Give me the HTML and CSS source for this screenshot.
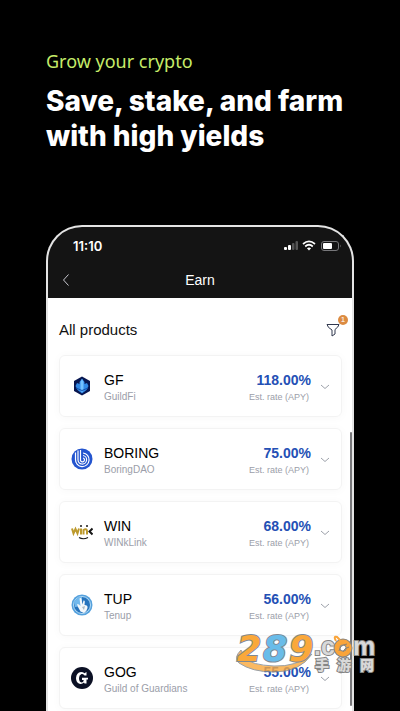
FILE: index.html
```html
<!DOCTYPE html>
<html lang="en">
<head>
<meta charset="utf-8">
<meta name="viewport" content="width=device-width, initial-scale=1">
<title>Earn</title>
<link rel="stylesheet" href="styles.css">
</head>
<body>
<header class="hero">
  <p class="eyebrow">Grow your crypto</p>
  <h1 class="headline">Save, stake, and farm<br>with high yields</h1>
</header>
<main class="phone">
  <div class="topbar">
    <div class="status">
      <span class="time">11:10</span>
      <svg class="signals" width="58" height="12" viewBox="0 0 58 12" aria-hidden="true">
        <g fill="#fff"><rect x="0" y="7" width="3" height="3" rx="1"/><rect x="4" y="5" width="3" height="5" rx="1"/></g>
        <g fill="#555"><rect x="8" y="3" width="2.500" height="7" rx="1"/><rect x="11.500" y="1" width="2.500" height="9" rx="1"/></g>
        <g fill="none" stroke="#fff" stroke-width="1.700"><path d="M19 4Q25 -1.200 31 4"/><path d="M21.200 6.500Q25 3 28.800 6.500"/></g>
        <path d="M25 10.500L22.900 8.300Q25 6.600 27.100 8.300Z" fill="#fff"/>
        <rect x="37.500" y="1.500" width="17" height="9" rx="2.500" fill="none" stroke="#77777a"/>
        <rect x="39" y="3" width="9" height="6" rx="1" fill="#fff"/>
        <path d="M56 4.500Q57.500 6 56 7.500Z" fill="#777"/>
      </svg>
    </div>
    <nav class="nav">
      <button class="back" type="button" aria-label="Back"><svg width="8" height="14" viewBox="0 0 8 14"><path d="M6.500 1.500L1.500 7l5 5.500"/></svg></button>
      <span class="nav-title">Earn</span>
    </nav>
  </div>
  <section class="products">
    <div class="list-head">
      <h2>All products</h2>
      <button class="filter" type="button" aria-label="Filter">
        <svg width="14" height="14" viewBox="0 0 14 14"><path d="M1 1.500H13Q12.500 4 9 6.500V11L6 13V7Q1.500 4.500 1 1.500Z"/></svg>
        <span class="badge">1</span>
      </button>
    </div>
    <ul class="cards">
      <li class="card">
        <svg class="coin" viewBox="0 0 22 22" aria-hidden="true">
          <path d="M11 1.500L19 6V16L11 20.500L3 16V6Z" fill="#071650"/>
          <path d="M11 3.500L13.500 7V9L16 8L17.500 11L15.500 15L11 18.500L6.500 15L4.500 11L6 8L8.500 9V7Z" fill="#3289e6"/>
          <path d="M11 4L12.500 7V15L11 17.500L9.500 15V7Z" fill="#73c1ff"/><path d="M5 13L11 15.500L17 13" fill="none" stroke="#1251ae"/>
        </svg>
        <div class="name"><strong>GF</strong><span>GuildFi</span></div>
        <div class="rate"><strong>118.00%</strong><span>Est. rate (APY)</span></div>
        <button class="expand" type="button" aria-label="Show GF"><svg width="10" height="6" viewBox="0 0 10 6"><path d="M1 1l4 3.500L9 1"/></svg></button>
      </li>
      <li class="card">
        <svg class="coin" viewBox="0 0 22 22" aria-hidden="true">
          <circle cx="11" cy="11" r="10.500" fill="#2455cf"/>
          <g fill="none" stroke="#fff" stroke-width="1.200"><path d="M4.500 4.500V11.500A6.800 6.800 0 1 0 12 5"/><path d="M7 2.500V11.500A4.300 4.300 0 1 0 12 7.500"/><path d="M9.500 2V11.500A2 2 0 1 0 12 10"/></g>
        </svg>
        <div class="name"><strong>BORING</strong><span>BoringDAO</span></div>
        <div class="rate"><strong>75.00%</strong><span>Est. rate (APY)</span></div>
        <button class="expand" type="button" aria-label="Show BORING"><svg width="10" height="6" viewBox="0 0 10 6"><path d="M1 1l4 3.500L9 1"/></svg></button>
      </li>
      <li class="card">
        <svg class="coin" viewBox="0 0 22 22" aria-hidden="true">
          <g fill="none" stroke="#bd9a2d" stroke-width="2"><path d="M1 7.500L2.500 12.500L4.500 8L6.500 12.500L8 7.500"/><path d="M10 7.500V13.500"/><path d="M12.500 13.500V9Q15.500 7 16 10V13.500"/></g>
          <g fill="none" stroke="#171717"><path d="M21.500 7.500L18.500 10.500L21.500 13.500" stroke-width="2"/><path d="M8 16.500Q12 19 17 16.500" stroke-width="1.200"/></g>
          <circle cx="10" cy="5" r="1" fill="#171717"/><circle cx="16" cy="5" r="1" fill="#171717"/>
        </svg>
        <div class="name"><strong>WIN</strong><span>WINkLink</span></div>
        <div class="rate"><strong>68.00%</strong><span>Est. rate (APY)</span></div>
        <button class="expand" type="button" aria-label="Show WIN"><svg width="10" height="6" viewBox="0 0 10 6"><path d="M1 1l4 3.500L9 1"/></svg></button>
      </li>
      <li class="card">
        <svg class="coin" viewBox="0 0 22 22" aria-hidden="true">
          <circle cx="11" cy="11" r="10.500" fill="#55a1dd"/><circle cx="11" cy="11" r="8.500" fill="#2774bd" stroke="#b5dcf5"/>
          <path d="M3 8Q7 2 11 3V12L4 13Z" fill="#72b9ed"/>
          <path d="M6 10L8 10.500L9.500 12L8.500 4.500Q10 3.500 10.500 5L11.500 10.500L12.500 6.500Q14 6 13.800 8L13.500 11Q17 11 16.500 14Q16 17 13 19L9.500 17.500L7 13Z" fill="#f4f8fb"/>
          <path d="M11 13l3-1-1 4z" fill="#adb9c3"/>
        </svg>
        <div class="name"><strong>TUP</strong><span>Tenup</span></div>
        <div class="rate"><strong>56.00%</strong><span>Est. rate (APY)</span></div>
        <button class="expand" type="button" aria-label="Show TUP"><svg width="10" height="6" viewBox="0 0 10 6"><path d="M1 1l4 3.500L9 1"/></svg></button>
      </li>
      <li class="card">
        <svg class="coin" viewBox="0 0 22 22" aria-hidden="true">
          <circle cx="11" cy="11" r="11" fill="#0b1024"/>
          <path d="M15.500 5V8.500H13.500Q12.500 6.500 10.500 7Q8 8 8 11Q8 15 10.500 15.500Q12.500 15.500 12.800 13H11V10.800H17V12.500H15.500V16.500H13.500L13 15.500Q11 17.500 8.500 16.800Q5 15.500 5 11Q5.500 5.500 10 5Q12 5 13.500 6.200Z" fill="#fff"/>
        </svg>
        <div class="name"><strong>GOG</strong><span>Guild of Guardians</span></div>
        <div class="rate"><strong>55.00%</strong><span>Est. rate (APY)</span></div>
        <button class="expand" type="button" aria-label="Show GOG"><svg width="10" height="6" viewBox="0 0 10 6"><path d="M1 1l4 3.500L9 1"/></svg></button>
      </li>
    </ul>
    <div class="scrollbar"></div>
  </section>
</main>
<svg class="watermark" width="144" height="44" viewBox="0 0 144 44" role="img" aria-label="289.com">
  <path d="M5 13Q-3 21 3 26Q16 35 38 35Q64 35 76 17Q60 30 38 29Q15 28 9 21Z" fill="#f9a83c" stroke="#7f8992" opacity=".8"/>
  <g class="wm-digits"><text x="1" y="24" fill="#faa83a">2</text><text x="27" y="24" fill="#69bce9">8</text><text x="53" y="24" fill="#faa83a">9</text></g>
  <text class="wm-com" x="78" y="18">.c</text><text class="wm-com" x="117" y="18">m</text>
  <g fill="none"><circle cx="107" cy="11" r="6" stroke="#858585" stroke-width="7"/><circle cx="107" cy="11" r="6" stroke="#f9a43a" stroke-width="5"/><path d="M100 4Q97 -1 101 0L104 3" stroke="#f9a43a" stroke-width="2"/><path d="M103 14Q104 8 111 7M107 15Q108 11 113 10" stroke="#8d8172"/></g>
  <text class="wm-cn" x="79" y="33">手</text><text class="wm-cn" x="101" y="33">游</text><text class="wm-cn" x="124" y="33">网</text>
</svg>
</body>
</html>
```
FILE: styles.css
```css
* { box-sizing: border-box; }

body {
  position: relative;
  margin: 0;
  min-height: 100vh;
  overflow-x: hidden;
  background: #000;
  color: #111;
  font-family: "Liberation Sans", Arial, sans-serif;
}

h1, h2, p, ul { margin: 0; padding: 0; }
button { padding: 0; border: 0; background: none; }
svg { display: block; }

.hero {
  padding: 50px 46px 0;
  color: #fff;
}
.eyebrow {
  color: #c6ec69;
  font-family: "Noto Sans", sans-serif;
  font-size: 18px;
  line-height: 22px;
}
.headline {
  margin-top: 12px;
  font-family: Inter, sans-serif;
  font-size: 28px;
  font-weight: 800;
  line-height: 35px;
  white-space: nowrap;
}

.phone {
  margin: 71px 46px 0;
  border: 2px solid #e4e4e4;
  border-bottom: 0;
  border-radius: 36px 36px 0 0;
  background: #fff;
  overflow: hidden;
}
.topbar { background: #141414; color: #fff; }
.status {
  display: flex;
  align-items: center;
  justify-content: space-between;
  height: 38px;
  padding: 0 10px 0 25px;
}
.time { font: 600 13px/16px Inter, sans-serif; }
.nav {
  display: grid;
  grid-template-columns: 40px 1fr 40px;
  align-items: center;
  height: 33px;
  padding-bottom: 3px;
}
.back { padding-left: 14px; }
.back svg { fill: none; stroke: #c8c8d0; stroke-width: 1; }
.nav-title { text-align: center; font-size: 14px; line-height: 20px; }

.products { position: relative; padding: 20px 10px 2px 11px; }
.list-head {
  display: flex;
  align-items: center;
  justify-content: space-between;
  padding-right: 2px;
}
.list-head h2 { font-size: 15px; font-weight: 400; line-height: 24px; }
.filter { position: relative; }
.filter svg { fill: none; stroke: #30384e; stroke-width: 1; }
.badge {
  position: absolute;
  top: -8px;
  right: -8px;
  width: 10px;
  border-radius: 50%;
  background: #dc8b41;
  color: #fff;
  font-size: 8px;
  line-height: 10px;
  text-align: center;
}

.cards { display: grid; gap: 11px; margin-top: 13px; list-style: none; }
.card {
  display: flex;
  align-items: center;
  height: 62px;
  padding: 0 11px;
  border: 1px solid #f3f3f3;
  border-radius: 6px;
  background: #fff;
  box-shadow: 0 1px 10px #00000008;
}
.coin { flex: none; width: 22px; height: 22px; }
.name, .rate { display: flex; flex-direction: column; padding-top: 4px; }
.name { flex: 1; margin-left: 11px; }
.rate { text-align: right; }
.name strong, .rate strong { font-size: 14px; line-height: 18px; }
.name strong { font-weight: 400; color: #000; }
.rate strong { color: #2450b5; }
.name span, .rate span { color: #9b9ea9; font-size: 10px; line-height: 16px; }
.rate span { padding-right: 2px; font-size: 9px; }
.expand { margin-left: 9px; padding-top: 2px; }
.expand svg { fill: none; stroke: #9da1aa; stroke-width: 1; }
.scrollbar {
  position: absolute;
  top: 134px;
  right: 0;
  bottom: 5px;
  width: 2px;
  border-radius: 1px;
  background: #77777a;
}

.watermark { position: absolute; right: 20px; bottom: 30px; overflow: visible; }
.wm-digits {
  font: italic 700 35px "DejaVu Sans", sans-serif;
  stroke: #7f8992;
  stroke-width: 2px;
  paint-order: stroke;
}
.wm-com {
  fill: #d9d9d9;
  stroke: #858585;
  stroke-width: 2px;
  paint-order: stroke;
  font: 700 25px "Liberation Sans", sans-serif;
}
.wm-cn {
  fill: #d9d9d9;
  stroke: #858585;
  stroke-width: 2px;
  paint-order: stroke;
  font: 900 14px "Noto Sans CJK SC", sans-serif;
}
```
